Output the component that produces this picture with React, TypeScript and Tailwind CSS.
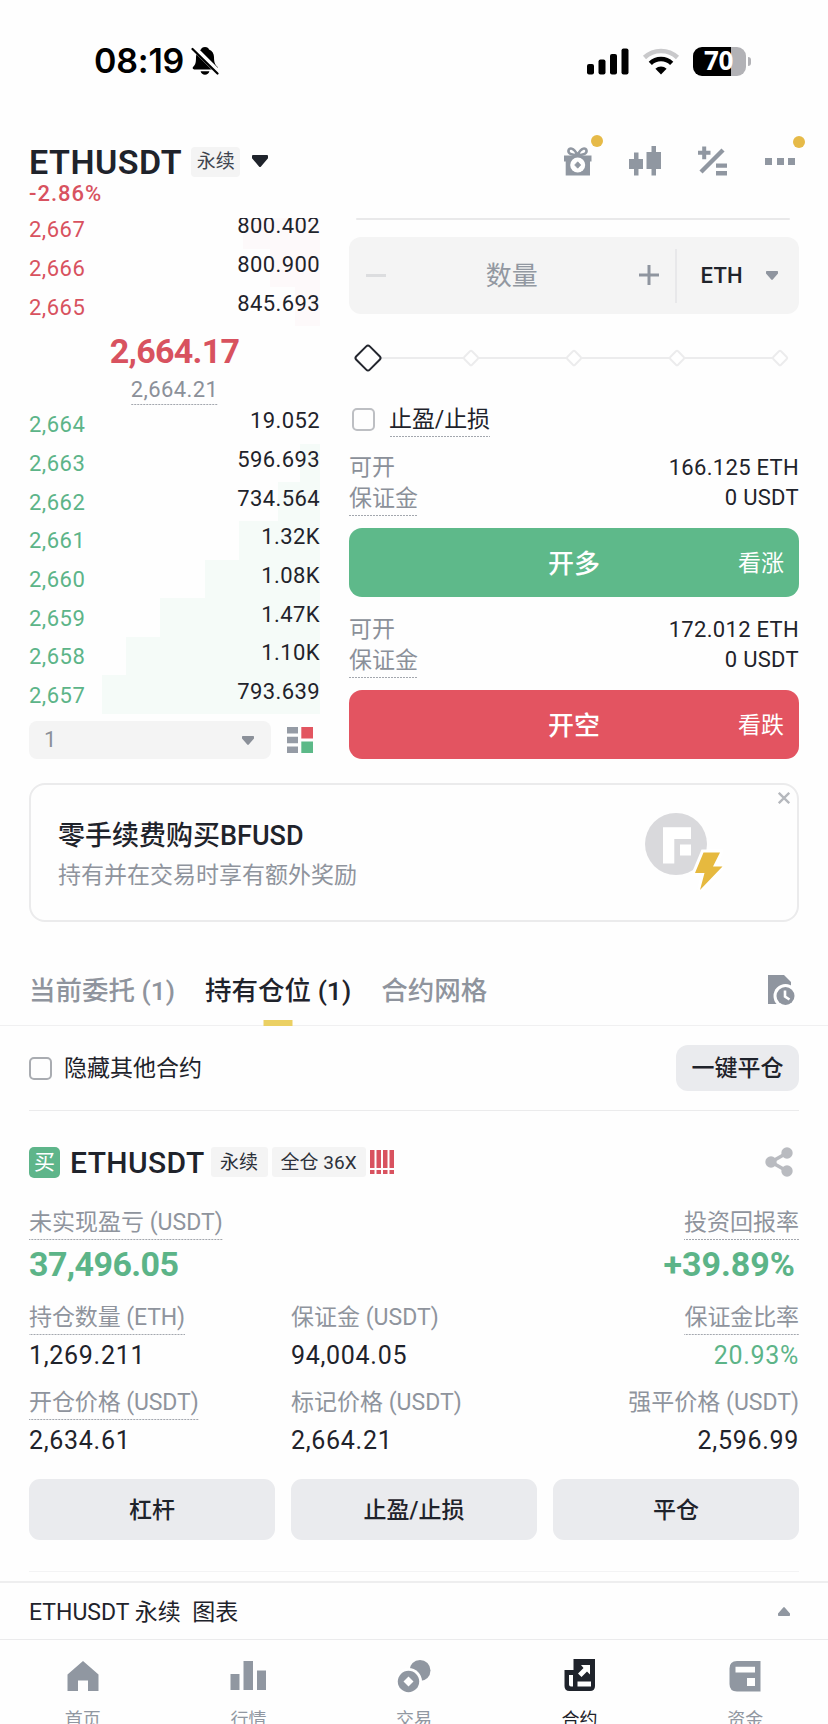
import type { ReactNode } from 'react'
import clsx from 'clsx'

interface BookRow {
  price: string
  amount: string
  depth: number
}

const asks: BookRow[] = [
  { price: '2,667', amount: '800.402', depth: 77 },
  { price: '2,666', amount: '800.900', depth: 50 },
  { price: '2,665', amount: '845.693', depth: 25 },
]

const bids: BookRow[] = [
  { price: '2,664', amount: '19.052', depth: 0 },
  { price: '2,663', amount: '596.693', depth: 20 },
  { price: '2,662', amount: '734.564', depth: 42 },
  { price: '2,661', amount: '1.32K', depth: 81 },
  { price: '2,660', amount: '1.08K', depth: 115 },
  { price: '2,659', amount: '1.47K', depth: 160 },
  { price: '2,658', amount: '1.10K', depth: 194 },
  { price: '2,657', amount: '793.639', depth: 218 },
]

// Label with the dotted underline that marks an explainable term
function Hint({ children, className }: { children: ReactNode; className?: string }) {
  return (
    <span
      className={clsx(
        'inline-flex items-center whitespace-nowrap bg-[linear-gradient(90deg,#a3a7ae_60%,transparent_60%)] bg-[length:3px_1px] bg-bottom bg-repeat-x',
        className,
      )}
    >
      {children}
    </span>
  )
}

function Caret({ className, up }: { className?: string; up?: boolean }) {
  return (
    <svg viewBox="0 0 16 12" className={clsx('fill-current', up && 'rotate-180', className)}>
      <path d="M1 0h14q1 0 1 1v2.200L9 11.400q-1 1.200-2 0L0 3.200V1q0-1 1-1z" />
    </svg>
  )
}

function StatusBar() {
  return (
    <div className="flex h-[122px] items-center justify-between pl-[94px] pr-[77px] text-black">
      <div className="flex items-center gap-[7px]">
        <span className="font-['Inter'] text-[34px] font-semibold leading-none tracking-[-0.2px]">08:19</span>
        <svg viewBox="0 0 28 30" className="h-[30px] w-[28px]">
          <path
            d="M14 1c2.400 0 3.600 1.200 4 2.400 3.400 1.200 5 4.200 5 7.600 0 5.500 1 7.500 3.400 9.800.9 1 .4 2.600-1 2.600H3.200c-1.500 0-2-1.600-1-2.600C4.600 18.500 5 16.500 5 11c0-3.400 1.600-6.400 5-7.600C10.400 2.200 11.600 1 14 1zM9.600 25.300h8.800c-.5 2.300-2.300 3.500-4.400 3.500s-3.900-1.200-4.400-3.500z"
            fill="#000"
          />
          <path d="M2.500 1.500 28 27" stroke="#fff" strokeWidth="5.500" />
          <path d="M1.500 3 26.500 27.500" stroke="#000" strokeWidth="2.200" strokeLinecap="round" />
        </svg>
      </div>
      <div className="flex items-center">
        <svg viewBox="0 0 42 27" className="h-[27px] w-[42px]">
          <rect x="0" y="16" width="7" height="10.500" rx="2" />
          <rect x="11.500" y="11.500" width="7" height="15" rx="2" />
          <rect x="23" y="6" width="7" height="20.500" rx="2" />
          <rect x="34.500" y="0.500" width="7" height="26" rx="2" />
        </svg>
        <svg viewBox="0 0 38 27" className="ml-[13px] h-[27px] w-[38px]" fill="none">
          <path d="M2.500 9.500a24 24 0 0 1 33 0" stroke="#c9c9cb" strokeWidth="4.500" />
          <path d="M8.300 15.300a15.500 15.500 0 0 1 21.400 0" stroke="#000" strokeWidth="4.600" />
          <path d="M19 26.500l-5.600-5.800a8.300 8.300 0 0 1 11.200 0z" fill="#000" />
        </svg>
        <div className="ml-[13px] flex h-[29px] w-[53px] items-center justify-center rounded-[9px] bg-[linear-gradient(90deg,#000_71%,#b2b2b6_71%)] pb-[2px] pr-[2px] font-['Open_Sans'] text-[26px] font-bold leading-none tracking-[-0.3px] text-white">
          70
        </div>
        <div className="ml-[2px] h-[9px] w-[3px] rounded-r-full bg-[#b2b2b6]" />
      </div>
    </div>
  )
}

function Header() {
  return (
    <header className="pl-[29px] pr-[29px] pt-5">
      <div className="flex h-10 items-center">
        <h1 className="text-[34px] font-semibold tracking-[0.500px]">ETHUSDT</h1>
        <span className="ml-[9px] flex h-[30px] w-[49px] items-center justify-center rounded-[4px] bg-[#f4f4f4] pb-[2px] text-[19px] text-[#40454f]">
          永续
        </span>
        <Caret className="mb-[3px] ml-[12px] h-[12px] w-[16px]" />
        <div className="mb-[2px] ml-auto flex items-center text-[#9097a1]">
          <span className="relative">
            <svg viewBox="0 0 28 30" className="h-[30px] w-[28px]">
              <path d="M13.500 9C7 9 4 7.500 4.500 4.500S9.500 1 13.500 9c4-8 8.500-7.500 9-4.500S20 9 13.500 9z" fill="none" stroke="currentColor" strokeWidth="2.600" />
              <path d="M0 9.500h27.500v6H26V29.500H1.700v-14H0z" fill="currentColor" />
              <circle cx="13.700" cy="19" r="7.500" fill="#fff" />
              <path d="M13.700 15.800l3 3.200-3 3.200-3-3.200z" fill="currentColor" stroke="currentColor" strokeWidth=".8" />
            </svg>
            <i className="absolute -top-[11px] left-[27px] size-3 rounded-full bg-[#e6ba48]" />
          </span>
          <svg viewBox="0 0 32 30" className="ml-[37px] h-[30px] w-[32px] fill-current">
            <path d="M5 6.500h4.500V13H14v10H9.500v6.500H5V23H0V13h5zM22.500 0H27v6h5v17h-5v6.500h-4.500V23h-5V6h5z" />
          </svg>
          <svg viewBox="0 0 30 30" className="ml-[36px] h-[30px] w-[30px]">
            <path d="M5.200.5h4v4.300h4.300v4H9.200v4.500h-4V8.800H1v-4h4.200zM19 17.500h11v4.300H19zM19 25h11v4.500H19z" fill="currentColor" />
            <path d="M26 4 4 26" stroke="currentColor" strokeWidth="4.400" />
          </svg>
          <span className="relative mr-[4px] ml-[38px] flex gap-[4.500px]">
            <i className="size-[7px] bg-current" />
            <i className="size-[7px] bg-current" />
            <i className="size-[7px] bg-current" />
            <i className="absolute -top-[22px] left-[28px] size-3 rounded-full bg-[#e6ba48]" />
          </span>
        </div>
      </div>
      <div className="flex h-6 items-center text-[22px] font-medium tracking-[1px] text-[#d8525f]">-2.86%</div>
    </header>
  )
}

function BookLine({ row, side }: { row: BookRow; side: 'ask' | 'bid' }) {
  const isAsk = side === 'ask'
  return (
    <div className="relative flex h-[38.650px] shrink-0 items-center justify-between text-[22px]">
      <div
        className={clsx('absolute inset-y-0 right-0', isAsk ? 'bg-[#fdf9fa]' : 'bg-[#f5fbf8]')}
        style={{ width: row.depth }}
      />
      <span className={clsx('relative pt-[2px] tracking-[0.500px]', isAsk ? 'text-[#d8525f]' : 'text-[#5cb488]')}>{row.price}</span>
      <span className="relative pb-[6px] tracking-[0.400px]">{row.amount}</span>
    </div>
  )
}

function OrderBook() {
  return (
    <div className="w-[291px]">
      <div className="flex h-[108px] flex-col justify-end overflow-hidden">
        {asks.map((row) => (
          <BookLine key={row.price} row={row} side="ask" />
        ))}
      </div>
      <div className="flex h-[79px] flex-col items-center">
        <div className="flex h-[50px] items-center text-[34px] font-bold tracking-[-0.700px] text-[#d8525f]">2,664.17</div>
        <Hint className="h-[30px] text-[22px] tracking-[0.400px] text-[#8b9099]">2,664.21</Hint>
      </div>
      {bids.map((row) => (
        <BookLine key={row.price} row={row} side="bid" />
      ))}
      <div className="mt-[7px] flex h-[38px] items-center">
        <div className="flex h-full w-[242px] items-center justify-between rounded-[8px] bg-[#f4f4f4] pl-[15px] pr-[17px] text-[22px] text-[#8b9099]">
          1
          <Caret className="h-[9px] w-[12px]" />
        </div>
        <svg viewBox="0 0 26 26" className="ml-[16px] size-[26px]">
          <path d="M0 0h11v6.500H0zM0 9.800h11v6.400H0zM0 19.500h11V26H0z" fill="#959ba5" />
          <path d="M14.300 0H26v11.500H14.300z" fill="#e25560" />
          <path d="M14.300 14.500H26V26H14.300z" fill="#5cb988" />
        </svg>
      </div>
    </div>
  )
}

function Limits({ amount }: { amount: string }) {
  return (
    <div className="text-[22px] tracking-[0.300px]">
      <div className="flex h-[31px] items-center justify-between">
        <span className="text-[23px] tracking-normal text-[#8b9099]">可开</span>
        <span>{amount}</span>
      </div>
      <div className="flex h-[31px] items-start justify-between">
        <Hint className="h-[33px] pb-[3px] text-[23px] tracking-normal text-[#8b9099]">保证金</Hint>
        <span className="flex h-[30px] items-center">0 USDT</span>
      </div>
    </div>
  )
}

function OrderForm() {
  return (
    <div className="w-[450px]">
      <div className="ml-[7px] mr-[9px] h-[2px] rounded-full bg-[#e9e9ea]" />
      <div className="mt-[17px] flex h-[77px] items-center rounded-[12px] bg-[#f4f4f4]">
        <i className="ml-[17px] h-[3px] w-[20px] bg-[#dcdddf]" />
        <span className="flex-1 pt-px text-center text-[26px] text-[#9298a1]">数量</span>
        <svg viewBox="0 0 20 20" className="mb-[2px] ml-[2px] mr-[16px] size-[20px]">
          <path d="M10 0v20M0 10h20" stroke="#8f959f" strokeWidth="3" />
        </svg>
        <div className="h-[54px] w-[2px] bg-[#e8e8ea]" />
        <span className="ml-[23px] pt-px text-[22px] font-medium tracking-[0.300px]">ETH</span>
        <Caret className="ml-[23px] mr-[21px] h-[9px] w-[12px] text-[#8f959f]" />
      </div>
      <svg viewBox="0 0 450 28" className="mt-[30px] h-[28px] w-full">
        <path d="M30 14h400" stroke="#ececed" strokeWidth="2" />
        <rect x="9.500" y="4.500" width="19" height="19" rx="2.500" transform="rotate(45 19 14)" fill="#fff" stroke="#23262e" strokeWidth="2" />
        {[122, 225, 328, 431].map((x) => (
          <rect key={x} x={x - 5.5} y="8.500" width="11" height="11" rx="1.500" transform={`rotate(45 ${x} 14)`} fill="#fff" stroke="#ececed" strokeWidth="2" />
        ))}
      </svg>
      <div className="mt-[30px] flex h-[35px] items-center">
        <i className="ml-[3px] size-[23px] rounded-[5px] border-2 border-[#bdbfc3]" />
        <Hint className="ml-[14px] h-[35px] text-[23px] tracking-[-0.100px]">止盈/止损</Hint>
      </div>
      <div className="mt-[15px]">
        <Limits amount="166.125 ETH" />
      </div>
      <button className="relative mt-[14px] flex h-[69px] w-full items-center justify-center rounded-[13px] bg-[#5eb98a] pt-[2px] text-[26px] font-medium text-white">
        开多<span className="absolute right-[15px] text-[23px] font-normal">看涨</span>
      </button>
      <div className="mt-[17px]">
        <Limits amount="172.012 ETH" />
      </div>
      <button className="relative mt-[14px] flex h-[69px] w-full items-center justify-center rounded-[13px] bg-[#e35461] pt-[2px] text-[26px] font-medium text-white">
        开空<span className="absolute right-[15px] text-[23px] font-normal">看跌</span>
      </button>
    </div>
  )
}

function PromoCard() {
  return (
    <div className="relative ml-[29px] mr-[29px] mt-[24px] flex h-[139px] items-center justify-between rounded-[16px] border-2 border-[#ebebec] pl-[27px] pr-[74px]">
      <div className="pt-[7px]">
        <div className="flex h-[39px] items-center text-[27px] font-medium">零手续费购买BFUSD</div>
        <div className="flex h-[39px] items-center text-[23px] text-[#8f949d]">持有并在交易时享有额外奖励</div>
      </div>
      <svg viewBox="0 0 78 78" className="mb-[2px] h-[78px] w-[78px]">
        <circle cx="31" cy="31" r="31" fill="#d9d9dc" />
        <path d="M18 14.300h28V26H29.300v24.500H18zM35 31.500h11v11H35z" fill="#fff" />
        <path d="M58.500 39.500h16.500l-7 14h9.500L55 77l4.500-17H50z" fill="#e6b93f" stroke="#fff" strokeWidth="6" paintOrder="stroke" />
      </svg>
      <svg viewBox="0 0 12 12" className="absolute right-[7px] top-[7px] size-[12px]">
        <path d="M.8.8l10.400 10.400M11.200.8.8 11.200" stroke="#b5b8bd" strokeWidth="2.300" />
      </svg>
    </div>
  )
}

function Tabs() {
  return (
    <nav className="mt-9 flex h-[68px] items-center border-b border-[#f0f0f1] pl-[29px] pr-[33px] text-[26.500px] font-medium text-[#8f949d]">
      <span>当前委托 (1)</span>
      <span className="relative ml-[30px] flex h-full items-center text-[#1f232b]">
        持有仓位 (1)
        <i className="absolute -bottom-px left-1/2 h-[6px] w-[29px] -translate-x-1/2 bg-[#ebd063]" />
      </span>
      <span className="ml-[30px]">合约网格</span>
      <svg viewBox="0 0 27 30" className="mb-[3px] ml-auto h-[30px] w-[27px]">
        <path d="M0 0h16l7 7v22H0z" fill="#8f959f" />
        <circle cx="17.500" cy="21" r="12" fill="#fff" />
        <circle cx="17.500" cy="21" r="9" fill="#8f959f" />
        <path d="M17 15.500v6l4.500 3" stroke="#fff" strokeWidth="2.600" fill="none" />
      </svg>
    </nav>
  )
}

function Stat({ label, value, hint, right, green }: { label: string; value: string; hint?: boolean; right?: boolean; green?: boolean }) {
  return (
    <div className={clsx('flex flex-col', right ? 'items-end' : 'items-start')}>
      {hint ? (
        <Hint className="h-[35px] text-[23px] tracking-[-0.100px] text-[#8f949d]">{label}</Hint>
      ) : (
        <span className="flex h-[35px] items-center whitespace-nowrap text-[23px] text-[#8f949d]">{label}</span>
      )}
      <span className={clsx('flex h-[39px] items-center pt-px text-[25px] tracking-[0.700px]', green && 'text-[#5cb488]')}>{value}</span>
    </div>
  )
}

function Position() {
  return (
    <section className="ml-[29px] mr-[29px]">
      <div className="mt-[36px] flex h-[30px] items-center">
        <span className="flex size-[31px] items-center justify-center rounded-[5px] bg-[#5eb58a] text-[21px] text-white">买</span>
        <h2 className="ml-[10px] pt-[2px] text-[30px] font-medium tracking-[0.400px]">ETHUSDT</h2>
        <span className="ml-[6px] flex h-[30px] w-[57px] items-center justify-center rounded-[3px] bg-[#f4f4f4] text-[19px] text-[#2d313a]">
          永续
        </span>
        <span className="ml-[4px] flex h-[30px] w-[94px] items-center justify-center whitespace-nowrap rounded-[3px] bg-[#f4f4f4] text-[19px] text-[#2d313a]">
          全仓 36X
        </span>
        <svg viewBox="0 0 25 24" className="ml-[4px] h-[24px] w-[25px] fill-[#d8525f]">
          <path d="M0 0h4.500v18H0zM6.500 0H11v18H6.500zM13 0h4.500v18H13zM19.500 0H24v18h-4.500zM0 20h4.500v4H0zM6.500 20H11v4H6.500zM13 20h4.500v4H13zM19.500 20H24v4h-4.500z" />
        </svg>
        <svg viewBox="0 0 28 30" className="ml-auto mr-[6px] h-[30px] w-[28px] text-[#b9bbc0]">
          <path d="M22 6 6 15l16 9" fill="none" stroke="currentColor" strokeWidth="3.600" />
          <circle cx="22" cy="6" r="5.700" fill="currentColor" />
          <circle cx="6" cy="15" r="5.700" fill="currentColor" />
          <circle cx="22" cy="24" r="5.700" fill="currentColor" />
        </svg>
      </div>

      <div className="mt-7 flex justify-between">
        <div>
          <Hint className="h-[35px] text-[23px] text-[#8f949d]">未实现盈亏 (USDT)</Hint>
          <div className="flex h-[48px] items-center text-[34px] font-bold tracking-[-0.600px] text-[#5cb488]">37,496.05</div>
        </div>
        <div className="flex flex-col items-end">
          <Hint className="h-[35px] text-[23px] text-[#8f949d]">投资回报率</Hint>
          <div className="mr-[4px] flex h-[48px] items-center text-[34px] font-bold text-[#5cb488]">+39.89%</div>
        </div>
      </div>

      <div className="mt-3 grid grid-cols-3 gap-x-4 gap-y-[11px]">
        <Stat label="持仓数量 (ETH)" value="1,269.211" hint />
        <Stat label="保证金 (USDT)" value="94,004.05" />
        <Stat label="保证金比率" value="20.93%" hint right green />
        <Stat label="开仓价格 (USDT)" value="2,634.61" hint />
        <Stat label="标记价格 (USDT)" value="2,664.21" />
        <Stat label="强平价格 (USDT)" value="2,596.99" right />
      </div>

      <div className="mt-[20px] grid grid-cols-3 gap-4">
        {['杠杆', '止盈/止损', '平仓'].map((label) => (
          <button key={label} className="h-[61px] rounded-[11px] bg-[#eaebee] pt-[2px] text-[23px] font-medium">
            {label}
          </button>
        ))}
      </div>
      <div className="mt-[31px] h-px bg-[#f3f3f4]" />
    </section>
  )
}

const navItems = [
  {
    label: '首页',
    icon: <path d="M18 3 33.500 16.500V33H23V22.500H13V33H2.500V16.500z" />,
  },
  {
    label: '行情',
    icon: <path d="M.5 16h9v16h-9zM13.500 3H23v29h-9.500zM27 12.500h9V32h-9z" />,
  },
  {
    label: '交易',
    icon: (
      <>
        <circle cx="24" cy="12.500" r="10.500" />
        <circle cx="12.500" cy="23.500" r="13.500" fill="#fff" />
        <circle cx="12.500" cy="23.500" r="10.700" />
        <path d="M12.500 18.500l5 5-5 5-5-5z" fill="#fff" />
      </>
    ),
  },
  {
    label: '合约',
    active: true,
    icon: (
      <>
        <path d="M11.500 1H33v27q0 5-5 5H7.500q-5 0-5-5V12h9z" />
        <path d="M7 17h4v11.500H9q-2 0-2-2zM15.500 23.500H29v5H15.500zM19 7h9v9.500l-3-3-5.500 5.500-3.500-3.500 5.500-5.500z" fill="#fff" />
      </>
    ),
  },
  {
    label: '资金',
    icon: (
      <path fillRule="evenodd" d="M10 3h23.500v30.500H10q-7.500 0-7.500-7.500V10.500Q2.500 3 10 3zM8.500 8.800v5.700H28V8.800zM20 20v8h8v-8z" />
    ),
  },
]

function BottomNav() {
  return (
    <nav className="grid h-[84px] grid-cols-5 border-t border-[#ebebec] text-[18px]">
      {navItems.map((item) => (
        <div
          key={item.label}
          className={clsx('flex flex-col items-center pt-[18px]', item.active ? 'text-[#1f232b]' : 'text-[#9097a1]')}
        >
          <svg viewBox="0 0 36 36" className="size-[36px] shrink-0 fill-current">
            {item.icon}
          </svg>
          <span className="mt-[16px] leading-[20px]">{item.label}</span>
        </div>
      ))}
    </nav>
  )
}

export default function App() {
  return (
    <div className="h-[1724px] w-[828px] overflow-hidden bg-[#fefefe] font-['Roboto','Noto_Sans_CJK_SC',sans-serif] leading-none text-[#1f232b]">
      <StatusBar />
      <Header />
      <main>
        <div className="mt-3 flex justify-between pl-[29px] pr-[29px]">
          <OrderBook />
          <OrderForm />
        </div>
        <PromoCard />
        <Tabs />
        <div className="ml-[29px] mr-[29px] flex h-[85px] items-center border-b border-[#ebebec]">
          <i className="size-[23px] rounded-[5px] border-2 border-[#a9acb1]" />
          <span className="ml-[12px] text-[23px]">隐藏其他合约</span>
          <button className="ml-auto h-[46px] w-[123px] rounded-[12px] bg-[#eaebee] text-[23px] font-medium">一键平仓</button>
        </div>
        <Position />
      </main>
      <div className="mt-[9px] flex h-[58px] items-center justify-between border-t-2 border-[#eeeeef] pl-[29px] pr-[38px] text-[23px]">
        <span className="whitespace-pre pt-[2px]">ETHUSDT 永续  图表</span>
        <Caret up className="h-[9px] w-[12px] text-[#9097a1]" />
      </div>
      <BottomNav />
    </div>
  )
}
